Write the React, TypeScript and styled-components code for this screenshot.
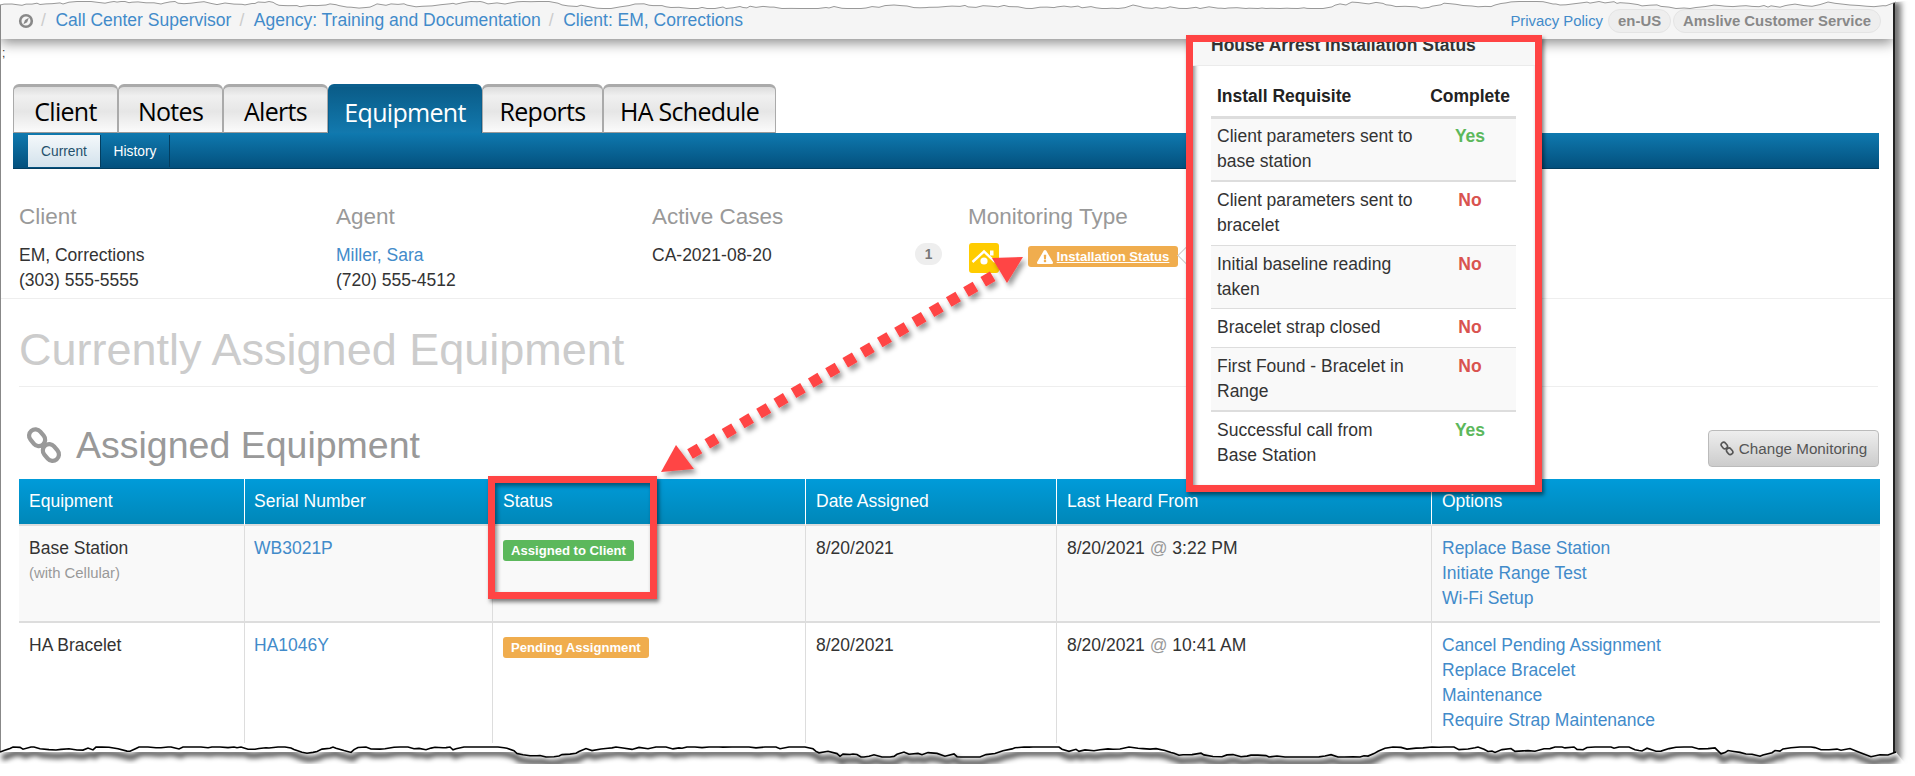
import styled, { createGlobalStyle } from "styled-components";
import { FaExclamationTriangle } from "react-icons/fa";

const GlobalStyle = createGlobalStyle`
  html, body {
    margin: 0;
    background: #fff;
    font-family: "Liberation Sans", Arial, sans-serif;
    color: #333;
  }
  * { box-sizing: border-box; }
`;

const Page = styled.div`
  position: relative;
  width: 1915px;
  height: 776px;
  overflow: hidden;
  background: #fff;
`;

const Sheet = styled.div`
  width: 1895px;
  height: 757px;
  background: #fff;
  border-left: 1px solid #888;
  border-right: 2px solid #222;
  box-shadow: 6px 2px 6px rgba(0, 0, 0, 0.55);
`;

const Clip = styled.div`
  height: 743px;
  overflow: hidden;
`;

const TopBar = styled.div`
  height: 39px;
  padding: 2px 12px 0 17px;
  display: flex;
  align-items: center;
  background: #f5f5f5;
  box-shadow: 0 4px 12px rgba(0, 0, 0, 0.45);
  font-size: 17.5px;
`;

const Crumb = styled.a`
  color: #428bca;
`;

const Slash = styled.span`
  color: #ccc;
  margin: 0 9.5px 0 8px;
`;

const Spacer = styled.div`
  flex: 1;
`;

const Privacy = styled.a`
  color: #428bca;
  font-size: 14.9px;
  margin-right: 3px;
`;

const Pill = styled.span`
  height: 24px;
  margin-left: 2px;
  padding: 0 9px;
  display: inline-flex;
  align-items: center;
  border-radius: 12px;
  background: #eee;
  border: 1px solid #e4e4e4;
  color: #888;
  font-size: 14.9px;
  font-weight: bold;
`;

const Stray = styled.div`
  height: 45px;
  padding: 7px 0 0 1px;
  font-size: 12px;
  line-height: 14px;
  color: #333;
`;

const TabRow = styled.div`
  height: 49px;
  margin-left: 12px;
  display: flex;
`;

const Tab = styled.div<{ $active?: boolean; $width: number }>`
  width: ${(p) => p.$width}px;
  display: flex;
  align-items: center;
  justify-content: center;
  padding-top: 3px;
  font-family: "Open Sans", sans-serif;
  font-size: 25px;
  letter-spacing: -0.7px;
  border-radius: 6px 6px 0 0;
  border: 1px solid ${(p) => (p.$active ? "#0b5f8d" : "#aaa")};
  border-bottom: ${(p) => (p.$active ? "none" : "1px solid #999")};
  border-top-width: 3px;
  color: ${(p) => (p.$active ? "#fff" : "#000")};
  background: ${(p) =>
    p.$active
      ? "linear-gradient(#0a5c88, #1279ae)"
      : "linear-gradient(#dcdcdc, #f0f0f0 20%, #e6e6e6 55%, #fbfbfb)"};
`;

const SubBar = styled.div`
  height: 36px;
  margin: 0 14px 0 12px;
  padding: 2px 0 1px 15px;
  display: flex;
  background: linear-gradient(#0f79af, #03507d);
  border-bottom: 1px solid #033e60;
`;

const SubTab = styled.div<{ $active?: boolean; $width: number }>`
  width: ${(p) => p.$width}px;
  display: flex;
  align-items: center;
  justify-content: center;
  font-size: 13.75px;
  color: ${(p) => (p.$active ? "#25506b" : "#fff")};
  background: ${(p) => (p.$active ? "linear-gradient(#f4f8fb, #d3e2ec)" : "transparent")};
  border-right: 1px solid #033e60;
`;

const InfoRow = styled.div`
  height: 130px;
  padding: 34px 0 0 18px;
  display: grid;
  grid-template-columns: 317px 316px 316px 1fr;
  border-bottom: 1px solid #eee;
`;

const InfoTitle = styled.div`
  font-size: 22.5px;
  line-height: 28px;
  color: #999;
  margin-bottom: 12px;
`;

const InfoLine = styled.div`
  font-size: 17.5px;
  line-height: 25px;
`;

const InfoLink = styled.a`
  color: #428bca;
`;

const CaseRow = styled.div`
  display: flex;
  justify-content: space-between;
  padding-right: 26px;
`;

const CountBadge = styled.span`
  width: 27px;
  height: 22px;
  border-radius: 11px;
  background: #eee;
  color: #777;
  font-size: 13.75px;
  font-weight: bold;
  display: flex;
  align-items: center;
  justify-content: center;
`;

const StatusRow = styled.div`
  display: flex;
  align-items: flex-start;
`;

const HomeTile = styled.div`
  width: 30px;
  height: 30px;
  margin: 0 29px 0 1px;
  border-radius: 3px;
  background: #ffcc00;
`;

const WarnBadge = styled.a`
  position: relative;
  height: 21px;
  width: 150px;
  margin-top: 3px;
  display: flex;
  align-items: center;
  justify-content: center;
  gap: 4px;
  border-radius: 3px;
  background: #f0ad4e;
  color: #fff;
  font-size: 13.1px;
  font-weight: bold;
  white-space: nowrap;

  span {
    text-decoration: underline;
  }

  &::after {
    content: "";
    position: absolute;
    left: 152px;
    top: 3px;
    width: 12px;
    height: 12px;
    background: #fff;
    border-left: 1px solid #ccc;
    border-bottom: 1px solid #ccc;
    transform: rotate(45deg);
  }
`;

const PageTitle = styled.h1`
  margin: 0 15px 0 18px;
  height: 88px;
  padding-top: 25px;
  font-size: 45px;
  line-height: 52px;
  font-weight: normal;
  color: #ccc;
  border-bottom: 1px solid #eee;
`;

const SectionHead = styled.div`
  height: 92px;
  margin: 0 14px 0 18px;
  padding-top: 37px;
  display: flex;
  align-items: flex-start;
  justify-content: space-between;
`;

const SectionTitle = styled.h2`
  margin: 0;
  display: flex;
  align-items: center;
  gap: 14px;
  padding-left: 7px;
  font-size: 37.5px;
  line-height: 42px;
  font-weight: normal;
  color: #999;
`;

const ActionButton = styled.button`
  height: 37px;
  width: 171px;
  margin-top: 6px;
  padding: 0;
  display: flex;
  align-items: center;
  justify-content: center;
  gap: 5px;
  font-family: inherit;
  font-size: 15.2px;
  color: #555;
  border: 1px solid #bbb;
  border-radius: 4px;
  background: linear-gradient(#eee, #ccc);
`;

const Grid = styled.table`
  margin-left: 18px;
  width: 1861px;
  table-layout: fixed;
  border-collapse: separate;
  border-spacing: 0;
  font-size: 17.5px;
  line-height: 25px;

  th {
    padding: 10px;
    font-weight: normal;
    text-align: left;
    color: #fff;
    background: linear-gradient(#009bd9, #0087b8);
    border-left: 1px solid #fff;
    border-bottom: 2px solid #ddd;
  }

  th:first-child, td:first-child {
    border-left: none;
  }

  th:nth-child(2), td:nth-child(2) {
    padding-left: 9px;
  }

  td {
    padding: 10px;
    vertical-align: top;
    border-left: 1px solid #ddd;
  }

  tr:nth-child(odd) td {
    background: #f9f9f9;
    border-bottom: 2px solid #ddd;
  }
`;

const Muted = styled.div`
  color: #999;
  font-size: 14.9px;
`;

const GridLink = styled.a`
  display: block;
  color: #428bca;
`;

const At = styled.span`
  color: #999;
`;

const Label = styled.span<{ $tone: string }>`
  height: 21px;
  margin-top: 4px;
  padding: 0 8px;
  display: inline-flex;
  align-items: center;
  vertical-align: top;
  border-radius: 3px;
  background: ${(p) => p.$tone};
  color: #fff;
  font-size: 13.1px;
  font-weight: bold;
`;

const Callout = styled.div`
  position: absolute;
  left: 1186px;
  top: 35px;
  width: 356px;
  height: 457px;
  overflow: hidden;
  border: 7px solid #ff4444;
  background: #fff;
  box-shadow: 2px 3px 4px rgba(0, 0, 0, 0.5), inset 2px 3px 4px rgba(0, 0, 0, 0.45);
`;

const CalloutHead = styled.div`
  height: 24px;
  padding-left: 18px;
  font-size: 17.5px;
  line-height: 7px;
  font-weight: bold;
  color: #333;
  background: #f7f7f7;
  border-bottom: 1px solid #ebebeb;
`;

const Checks = styled.table`
  margin: 17.5px 0 0 18px;
  width: 305px;
  table-layout: fixed;
  border-collapse: separate;
  border-spacing: 0;
  font-size: 17.5px;
  line-height: 25px;

  th {
    padding: 0 6px 7.5px;
    text-align: left;
    color: #222;
    border-bottom: 3px solid #ddd;
  }

  th:last-child {
    text-align: center;
    padding: 0 0 7.5px;
  }

  td {
    padding: 5.5px 11px 6.5px 6px;
    vertical-align: top;
    border-bottom: 1px solid #ddd;
  }

  tr:nth-child(odd) td {
    background: #f9f9f9;
  }

  tr:nth-child(1) td {
    padding-top: 4.5px;
    border-bottom-width: 2px;
  }

  tr:nth-child(2) td {
    padding-bottom: 7.5px;
  }

  tr:nth-child(5) td {
    border-bottom-width: 2px;
  }

  tr:nth-child(4) td {
    padding-top: 6px;
    padding-bottom: 7px;
  }

  tr:last-child td {
    border-bottom: none;
    background: #fff;
  }
`;

const Verdict = styled.td<{ $ok?: boolean }>`
  && {
    padding-left: 0;
    padding-right: 0;
  }
  text-align: center;
  font-weight: bold;
  color: ${(p) => (p.$ok ? "#5cb85c" : "#d9534f")};
`;

const Highlight = styled.div`
  position: absolute;
  left: 488px;
  top: 476px;
  width: 169px;
  height: 123px;
  border: 7px solid #ff4444;
  box-shadow: 2px 3px 4px rgba(0, 0, 0, 0.5), inset 2px 3px 4px rgba(0, 0, 0, 0.45);
`;

const Overlay = styled.svg`
  position: absolute;
  left: 0;
  top: 0;
  pointer-events: none;
`;

// torn paper edge, seeded so that it comes out the same on every load
function tornLine(width: number, base: number, amp: number, step: number, seed: number, end: number) {
  let s = seed;
  const rnd = () => {
    s = (s * 1664525 + 1013904223) % 4294967296;
    return s / 4294967296;
  };
  let y = base;
  let d = `M0 ${base}`;
  for (let x = 4; x < width - 8; x += 3 + Math.floor(rnd() * 7)) {
    y += (rnd() - 0.5) * step;
    y = Math.max(base - amp, Math.min(base + amp, y));
    d += ` L${x} ${y.toFixed(1)}`;
  }
  return `${d} L${width - 8} ${end} L${width} ${end - 3}`;
}

const topEdge = tornLine(1896, 5, 3.5, 3.5, 17, 5);
const bottomEdge = tornLine(1896, 752, 5, 6, 91, 755);

const CrumbIcon = () => (
  <svg width="16" height="16" viewBox="0 0 16 16" style={{ marginRight: -1 }}>
    <circle cx="8" cy="8" r="5.8" fill="none" stroke="#888" strokeWidth="2.6" />
    <path d="M10.8 4.8 L7 7 L5.4 11.2 L9.2 9.2 Z" fill="#888" />
  </svg>
);

const ChainIcon = ({ size }: { size: number }) => (
  <svg width={size} height={size * 1.06} viewBox="0 0 34 36" fill="none" stroke="currentColor" strokeWidth="4">
    <rect x="2" y="5" width="17" height="12" rx="6" transform="rotate(50 10.5 11)" />
    <rect x="15" y="19" width="17" height="12" rx="6" transform="rotate(50 23.5 25)" />
  </svg>
);

const HomeGlyph = () => (
  <svg width="30" height="30" viewBox="0 0 30 30" fill="none" stroke="#fff" strokeWidth="2.4">
    <path d="M3.5 19 L15 8.5 L26 19" />
    <rect x="21" y="7.5" width="3.5" height="5" fill="#fff" stroke="none" />
    <circle cx="15" cy="18" r="3.6" fill="#fff" stroke="none" />
  </svg>
);

export default function App() {
  return (
    <Page>
      <GlobalStyle />
      <Sheet>
        <Clip>
          <TopBar>
            <CrumbIcon />
            <Slash>/</Slash>
            <Crumb>Call Center Supervisor</Crumb>
            <Slash>/</Slash>
            <Crumb>Agency: Training and Documentation</Crumb>
            <Slash>/</Slash>
            <Crumb>Client: EM, Corrections</Crumb>
            <Spacer />
            <Privacy>Privacy Policy</Privacy>
            <Pill>en-US</Pill>
            <Pill>Amslive Customer Service</Pill>
          </TopBar>
          <Stray>;</Stray>
          <TabRow>
            <Tab $width={105}>Client</Tab>
            <Tab $width={105}>Notes</Tab>
            <Tab $width={105}>Alerts</Tab>
            <Tab $width={154} $active>Equipment</Tab>
            <Tab $width={121}>Reports</Tab>
            <Tab $width={173}>HA Schedule</Tab>
          </TabRow>
          <SubBar>
            <SubTab $width={73} $active>Current</SubTab>
            <SubTab $width={69}>History</SubTab>
          </SubBar>
          <InfoRow>
            <div>
              <InfoTitle>Client</InfoTitle>
              <InfoLine>EM, Corrections</InfoLine>
              <InfoLine>(303) 555-5555</InfoLine>
            </div>
            <div>
              <InfoTitle>Agent</InfoTitle>
              <InfoLine><InfoLink>Miller, Sara</InfoLink></InfoLine>
              <InfoLine>(720) 555-4512</InfoLine>
            </div>
            <div>
              <InfoTitle>Active Cases</InfoTitle>
              <CaseRow>
                <InfoLine>CA-2021-08-20</InfoLine>
                <CountBadge>1</CountBadge>
              </CaseRow>
            </div>
            <div>
              <InfoTitle>Monitoring Type</InfoTitle>
              <StatusRow>
                <HomeTile><HomeGlyph /></HomeTile>
                <WarnBadge>
                  <FaExclamationTriangle size={16} />
                  <span>Installation Status</span>
                </WarnBadge>
              </StatusRow>
            </div>
          </InfoRow>
          <PageTitle>Currently Assigned Equipment</PageTitle>
          <SectionHead>
            <SectionTitle><ChainIcon size={36} />Assigned Equipment</SectionTitle>
            <ActionButton><ChainIcon size={14} />Change Monitoring</ActionButton>
          </SectionHead>
          <Grid>
            <colgroup>
              <col width="225" />
              <col width="248" />
              <col width="313" />
              <col width="251" />
              <col width="375" />
              <col width="449" />
            </colgroup>
            <thead>
              <tr>
                <th>Equipment</th>
                <th>Serial Number</th>
                <th>Status</th>
                <th>Date Assigned</th>
                <th>Last Heard From</th>
                <th>Options</th>
              </tr>
            </thead>
            <tbody>
              <tr>
                <td>Base Station<Muted>(with Cellular)</Muted></td>
                <td><GridLink>WB3021P</GridLink></td>
                <td><Label $tone="#5cb85c">Assigned to Client</Label></td>
                <td>8/20/2021</td>
                <td>8/20/2021 <At>@</At> 3:22 PM</td>
                <td>
                  <GridLink>Replace Base Station</GridLink>
                  <GridLink>Initiate Range Test</GridLink>
                  <GridLink>Wi-Fi Setup</GridLink>
                </td>
              </tr>
              <tr>
                <td>HA Bracelet</td>
                <td><GridLink>HA1046Y</GridLink></td>
                <td><Label $tone="#f0ad4e">Pending Assignment</Label></td>
                <td>8/20/2021</td>
                <td>8/20/2021 <At>@</At> 10:41 AM</td>
                <td>
                  <GridLink>Cancel Pending Assignment</GridLink>
                  <GridLink>Replace Bracelet</GridLink>
                  <GridLink>Maintenance</GridLink>
                  <GridLink>Require Strap Maintenance</GridLink>
                </td>
              </tr>
            </tbody>
          </Grid>
        </Clip>
      </Sheet>

      <Highlight />
      <Overlay width="1915" height="776">
        <defs>
          <filter id="soft" x="-5%" y="-5%" width="110%" height="110%">
            <feGaussianBlur stdDeviation="2.5" />
          </filter>
          <filter id="drop" x="-5%" y="-5%" width="110%" height="110%">
            <feDropShadow dx="3" dy="4" stdDeviation="2.5" floodColor="#000" floodOpacity="0.4" />
          </filter>
        </defs>
        <g filter="url(#drop)" fill="#ff4444">
          <line x1="690" y1="454" x2="1000" y2="272" stroke="#ff4444" strokeWidth="11" strokeDasharray="11 9" />
          <path d="M676 445 L661 472 L694 469 Z" />
          <path d="M992 258 L1023 257 L1007 283 Z" />
        </g>
        <path d={`${topEdge} L1915 0 L0 0 Z`} fill="#fff" />
        <path d={topEdge} fill="none" stroke="#999" strokeWidth="1" />
        <path d={`${bottomEdge} L1915 776 L0 776 Z`} fill="#fff" />
        <path d={bottomEdge} fill="none" stroke="#000" strokeOpacity="0.65" strokeWidth="6"
          transform="translate(2 6)" filter="url(#soft)" />
        <path d={bottomEdge} fill="none" stroke="#000" strokeWidth="1.6" />
      </Overlay>

      <Callout>
        <CalloutHead>House Arrest Installation Status</CalloutHead>
        <Checks>
          <colgroup>
            <col width="213" />
            <col width="92" />
          </colgroup>
          <thead>
            <tr>
              <th>Install Requisite</th>
              <th>Complete</th>
            </tr>
          </thead>
          <tbody>
            <tr><td>Client parameters sent to base station</td><Verdict $ok>Yes</Verdict></tr>
            <tr><td>Client parameters sent to bracelet</td><Verdict>No</Verdict></tr>
            <tr><td>Initial baseline reading taken</td><Verdict>No</Verdict></tr>
            <tr><td>Bracelet strap closed</td><Verdict>No</Verdict></tr>
            <tr><td>First Found - Bracelet in Range</td><Verdict>No</Verdict></tr>
            <tr><td>Successful call from Base Station</td><Verdict $ok>Yes</Verdict></tr>
          </tbody>
        </Checks>
      </Callout>
    </Page>
  );
}
